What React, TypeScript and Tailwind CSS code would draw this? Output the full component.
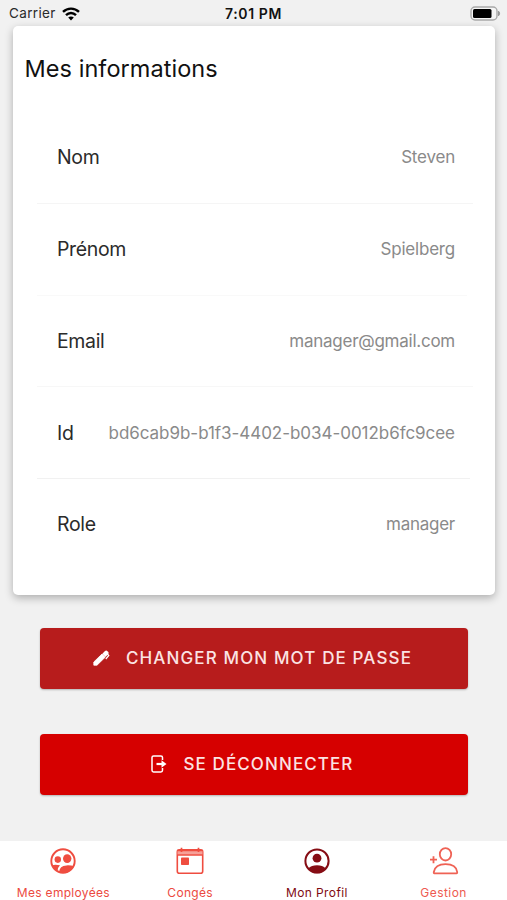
import React from "react";

const rows = [
  { label: "Nom", value: "Steven", tracking: "tracking-[-0.2px]", line: "w-[436px]", lineColor: "bg-[#f5f5f5]" },
  { label: "Prénom", value: "Spielberg", tracking: "tracking-[-0.2px]", line: "w-[430px]", lineColor: "bg-[#f9f9f9]" },
  { label: "Email", value: "manager@gmail.com", tracking: "tracking-[-0.25px]", line: "w-[436px]", lineColor: "bg-[#f7f7f7]" },
  { label: "Id", value: "bd6cab9b-b1f3-4402-b034-0012b6fc9cee", tracking: "tracking-[-0.04px]", line: "w-[433px]", lineColor: "bg-[#f1f1f1]" },
  { label: "Role", value: "manager", tracking: "tracking-[-0.25px]", line: "", lineColor: "" },
];

function StatusBar() {
  return (
    <header className="flex h-[26px] items-center justify-between pr-[6px] pl-[9px] text-[13.5px] text-[#111]">
      <div className="flex w-[120px] items-center gap-[6px] pt-px">
        <span className="tracking-[0.35px] text-[#2a2a2a]">Carrier</span>
        <svg width="18" height="14" viewBox="0 0 18 14" fill="none" stroke="#000" strokeWidth="2.4">
          <path d="M1 4.9C5.5.5 12.5.5 17 4.9" />
          <path d="M4 8.2C6.9 5.3 11.1 5.3 14 8.2" />
          <path d="M6.2 10.6C7.8 9.1 10.2 9.1 11.8 10.6L9 13.5Z" fill="#000" stroke="none" />
        </svg>
      </div>
      <span className="text-[14px] font-semibold tracking-[0.6px] whitespace-nowrap">7:01 PM</span>
      <div className="flex w-[123px] justify-end">
        <svg width="31" height="15" viewBox="0 0 31 15">
          <rect x="1" y="1" width="26" height="13" rx="4" fill="#f5f5f5" stroke="#a9a9a9" strokeWidth="1.4" />
          <rect x="3" y="3" width="18.5" height="9" rx="1.5" fill="#000" />
          <path d="M28.5 5.2a3 3 0 0 1 0 4.6Z" fill="#999" stroke="#999" />
        </svg>
      </div>
    </header>
  );
}

function InfoCard() {
  return (
    <section className="mx-auto h-[569px] w-[482px] rounded-[5px] bg-white shadow-[0_3px_9px_rgba(0,0,0,0.28)]">
      <h1 className="pt-[26px] pl-3 text-[23.5px] leading-[34px] font-normal tracking-[0.05px] text-[#111]">Mes informations</h1>
      <div className="pt-[26px] pl-6">
        {rows.map((r) => (
          <div key={r.label} className="flex h-[91.8px] flex-col">
            <div className="flex flex-1 items-center justify-between pt-px pr-[39.5px] pl-[20.5px]">
              <span className="text-[19.5px] tracking-[-0.35px] text-[#2b2b2b]">{r.label}</span>
              <span className={`text-[17px] text-[#8a8a8a] ${r.tracking}`}>{r.value}</span>
            </div>
            <div className={`h-px ${r.line} ${r.lineColor}`} />
          </div>
        ))}
      </div>
    </section>
  );
}

function Actions() {
  return (
    <div className="flex flex-col items-center gap-[45.5px] pt-[33px] text-[17px] font-medium text-[#fbe3e3]">
      <button className="flex h-[60.5px] w-[428px] items-center justify-center gap-4 rounded-[4px] bg-[#b71c1c] pr-[2px] shadow-[0_1px_2px_rgba(0,0,0,0.25)]">
        <svg width="17" height="16" viewBox="0 0 17 16">
          <path d="M0.8 15.2V12L9 4L12.2 7.2L4 15.2Z" fill="#fff" stroke="#fff" strokeWidth="0.8" strokeLinejoin="round" />
          <path d="M9.3 3.7L12 1Q13.2 0 14.5 1.2L15.3 2Q16.1 3 15.3 4L12.5 6.9Z" fill="#fff" />
          <path d="M12.500 2L15.800 5.500L12.800 9" fill="none" stroke="#fff" strokeWidth="1.200" />
        </svg>
        <span className="tracking-[1.130px]">CHANGER MON MOT DE PASSE</span>
      </button>
      <button className="flex h-[60.5px] w-[428px] items-center justify-center gap-4 rounded-[4px] bg-[#d60000] pr-[3px] shadow-[0_1px_2px_rgba(0,0,0,0.25)]">
        <svg width="17" height="18" viewBox="0 0 17 18" fill="none" stroke="#fff" strokeWidth="1.5">
          <path d="M11.5 5V2.6Q11.5 1 9.9 1H2.6Q1 1 1 2.6V15.3Q1 17 2.600 17H9.900Q11.500 17 11.500 15.300V13" />
          <path d="M5.500 9H12" strokeWidth="2.200" />
          <path d="M10.500 5.300L15.500 9L10.500 12.700Z" fill="#fff" stroke="none" />
        </svg>
        <span className="tracking-[1.100px]">SE DÉCONNECTER</span>
      </button>
    </div>
  );
}

function TeamIcon() {
  return (
    <svg width="28" height="28" viewBox="0 0 28 28">
      <circle cx="14" cy="14" r="11.7" fill="none" stroke="#ef4d40" strokeWidth="1.9" />
      <ellipse cx="8.8" cy="12.600" rx="3.200" ry="3.300" fill="#ef4d40" />
      <ellipse cx="18.200" cy="11.600" rx="4.200" ry="4.300" fill="#ef4d40" />
      <path d="M3 18.200Q6.500 17.500 11 18.300Q9 20 8.600 24Q4.800 22.500 3 18.200Z" fill="#ef4d40" />
      <path d="M10.200 24.500Q10.500 19 17.500 18.400Q22 18.200 25 19.200Q21 26.500 14 26Q12 26 10.200 24.500Z" fill="#ef4d40" />
    </svg>
  );
}

function CalendarIcon() {
  return (
    <svg width="28" height="28" viewBox="0 0 28 28">
      <rect x="1.300" y="2.900" width="25.400" height="23.400" rx="2" fill="none" stroke="#ef4d40" strokeWidth="1.600" />
      <path d="M1.500 5.800H26.500" stroke="#f6a098" strokeWidth="4" />
      <path d="M1.300 8.100H26.700M1.300 3.500H26.700" stroke="#ef4d40" strokeWidth="1.500" />
      <path d="M5.500 0.800V5M22.500 0.800V5" stroke="#ef4d40" strokeWidth="1.700" />
      <rect x="5" y="10.400" width="8" height="7.600" rx="0.800" fill="#ef4d40" />
    </svg>
  );
}

function ProfileIcon() {
  return (
    <svg width="28" height="28" viewBox="0 0 28 28">
      <circle cx="14" cy="14" r="11.600" fill="none" stroke="#860d14" strokeWidth="2" />
      <circle cx="14" cy="11.200" r="4.400" fill="#860d14" />
      <path d="M5.200 21.500Q8.500 18.200 14 18.200T22.800 21.500Q19 26.300 14 26.300T5.200 21.500Z" fill="#860d14" />
    </svg>
  );
}

function AddPersonIcon() {
  return (
    <svg width="30" height="28" viewBox="0 0 30 28" fill="none" stroke="#ef6255" strokeWidth="1.800">
      <ellipse cx="16.500" cy="7.300" rx="5.700" ry="6.200" />
      <path d="M5.300 26.300Q4.600 26.300 4.800 25C5.800 19.300 10.800 17.100 16.500 17.100S27.500 19.300 28.200 25Q28.300 26.300 27.500 26.300Z" />
      <path d="M1 12.700H8M4.500 9.200V16.200" />
    </svg>
  );
}

const tabs = [
  { label: "Mes employées", icon: <TeamIcon />, color: "text-[#ec4a3f]", tracking: "tracking-[0.3px]" },
  { label: "Congés", icon: <CalendarIcon />, color: "text-[#ec4a3f]", tracking: "tracking-[0.3px]" },
  { label: "Mon Profil", icon: <ProfileIcon />, color: "text-[#800a12]", tracking: "tracking-[0.4px]" },
  { label: "Gestion", icon: <AddPersonIcon />, color: "text-[#ee5a50]", tracking: "tracking-[0.45px]" },
];

export default function App() {
  return (
    <div className="flex h-[900px] w-[507px] flex-col overflow-hidden bg-[#f1f1f1] font-['Inter','Liberation_Sans',sans-serif]">
      <StatusBar />
      <InfoCard />
      <Actions />
      <nav className="mt-auto grid h-[59px] grid-cols-4 bg-white">
        {tabs.map((t) => (
          <a key={t.label} className="flex flex-col items-center pt-[6px]">
            {t.icon}
            <span className={`mt-[10px] text-[12px] leading-4 font-normal whitespace-nowrap ${t.color} ${t.tracking}`}>{t.label}</span>
          </a>
        ))}
      </nav>
    </div>
  );
}
